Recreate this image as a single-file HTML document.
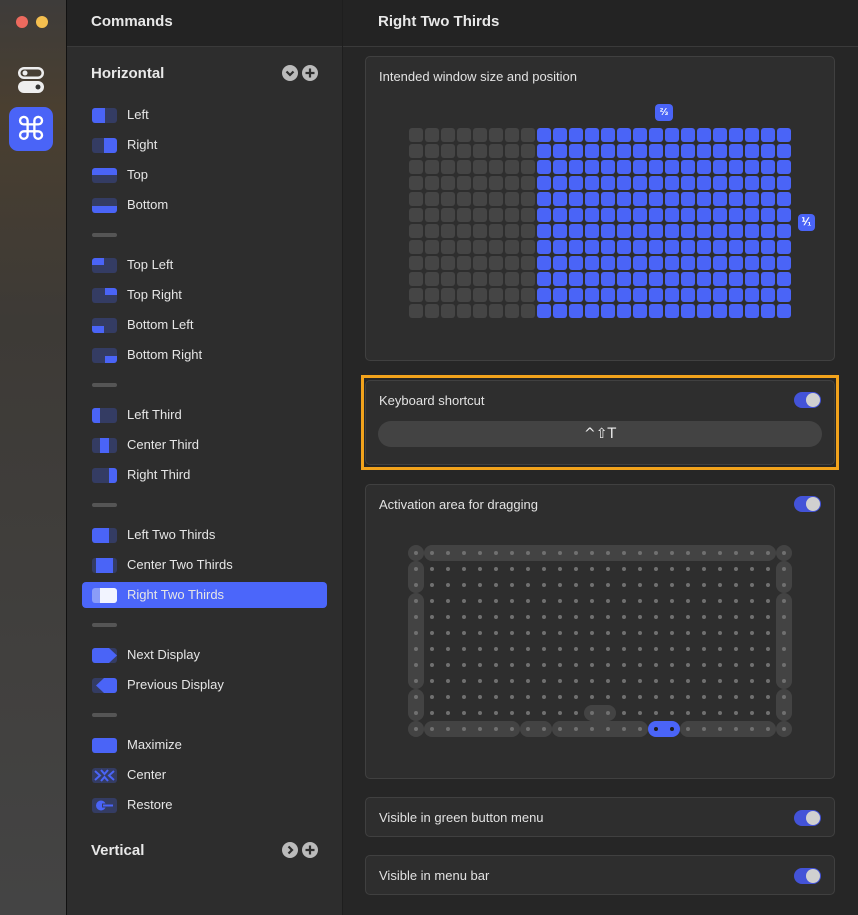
<!DOCTYPE html>
<html><head><meta charset="utf-8">
<style>
*{margin:0;padding:0;box-sizing:border-box}
body{width:858px;height:915px;overflow:hidden;background:#262626;font-family:"Liberation Sans",sans-serif;color:#e6e6e6;position:relative}
.abs{position:absolute}
#strip{left:0;top:0;width:67px;height:915px;background:linear-gradient(180deg,#3e3c3a 0%,#4a3f30 12%,#3d3a36 35%,#444 100%);border-right:1px solid #111}
#mid{left:67px;top:0;width:276px;height:915px;background:#2d2d2d;border-right:1px solid #1e1e1e}
.hdr{top:0;height:47px;background:#232323;border-bottom:1px solid #3a3a3a}
.title{font-size:15px;font-weight:bold;color:#e8e8e8}
.item{position:absolute;left:127px;font-size:13px;color:#e6e6e6}
.ic{position:absolute;left:92px;width:25px;height:15px;border-radius:3px;background:#343c63;overflow:hidden}
.ic i{position:absolute;background:#4a64f7;display:block}
.sep{position:absolute;left:92px;width:25px;height:4px;border-radius:2px;background:#555}
.card{position:absolute;left:365px;width:470px;background:#2e2e2e;border:1px solid #404040;border-radius:5px}
.lbl{position:absolute;left:13px;font-size:13px;color:#e2e2e2}
.tg{position:absolute;right:13px;width:27px;height:16px;border-radius:8px;background:#4353d8}
.tg:after{content:"";position:absolute;right:1px;top:1px;width:14px;height:14px;border-radius:7px;background:#d0d0d0}
</style></head><body>
<div id="strip" class="abs">
 <div class="abs" style="left:16px;top:16px;width:12px;height:12px;border-radius:6px;background:#ec6a5e"></div>
 <div class="abs" style="left:36px;top:16px;width:12px;height:12px;border-radius:6px;background:#f4bf4f"></div>
 <svg class="abs" style="left:18px;top:67px" width="26" height="26"><rect x="1.25" y="1.25" width="23.5" height="9.5" rx="4.75" fill="none" stroke="#eee" stroke-width="2.5"/><circle cx="7" cy="6" r="2.5" fill="#eee"/><rect x="0" y="14" width="26" height="12" rx="6" fill="#eee"/><circle cx="20" cy="20" r="2.5" fill="#333"/></svg>
 <div class="abs" style="left:9px;top:107px;width:44px;height:44px;border-radius:9px;background:#4a64f7;color:#fff;font-size:32px;text-align:center;line-height:44px;font-family:'DejaVu Sans',sans-serif">⌘</div>
</div>
<div id="mid" class="abs">
 <div class="abs hdr" style="left:0;width:275px"></div>
 <div class="abs title" style="left:24px;top:13px">Commands</div>
 <div class="abs title" style="left:24px;top:65px">Horizontal</div>
 <svg class="abs" style="left:215px;top:65px" width="36" height="16"><circle cx="8" cy="8" r="8" fill="#bbb"/><path d="M4.5 6.5L8 10L11.5 6.5" stroke="#2d2d2d" stroke-width="2.2" fill="none"/><circle cx="28" cy="8" r="8" fill="#bbb"/><path d="M28 3.5V12.5M23.5 8H32.5" stroke="#2d2d2d" stroke-width="2.2"/></svg>
 <div class="abs title" style="left:24px;top:842px">Vertical</div>
 <svg class="abs" style="left:215px;top:842px" width="36" height="16"><circle cx="8" cy="8" r="8" fill="#bbb"/><path d="M6.5 4.5L10 8L6.5 11.5" stroke="#2d2d2d" stroke-width="2.2" fill="none"/><circle cx="28" cy="8" r="8" fill="#bbb"/><path d="M28 3.5V12.5M23.5 8H32.5" stroke="#2d2d2d" stroke-width="2.2"/></svg>
</div>
<div class="abs" style="left:82px;top:582px;width:245px;height:26px;border-radius:4px;background:#4b66fa"></div>
<div id="list"></div>
<div class="abs hdr" style="left:343px;width:515px"></div>
<div class="abs title" style="left:378px;top:13px">Right Two Thirds</div>

<div class="card" style="top:56px;height:305px">
 <div class="lbl" style="top:12px">Intended window size and position</div>
</div>
<div class="abs" style="left:655px;top:104px;width:18px;height:17px;border-radius:4px;background:#4a64f7;color:#fff;font-size:10px;text-align:center;line-height:17px;font-weight:bold">⅔</div>
<div class="abs" style="left:798px;top:214px;width:17px;height:17px;border-radius:4px;background:#4a64f7;color:#fff;font-size:10px;text-align:center;line-height:17px;font-weight:bold">⅟₁</div>
<div id="grid1"></div>

<div class="abs" style="left:361px;top:375px;width:478px;height:95px;border:3px solid #f2a31c"></div>
<div class="card" style="top:380px;height:85px">
 <div class="lbl" style="top:12px">Keyboard shortcut</div><div class="tg" style="top:11px"></div>
 <div class="abs" style="left:12px;top:40px;width:444px;height:26px;border-radius:13px;background:#434343;text-align:center;line-height:26px;font-size:14px;color:#eee;font-family:'DejaVu Sans',sans-serif">^⇧T</div>
</div>
<div class="card" style="top:484px;height:295px">
 <div class="lbl" style="top:12px">Activation area for dragging</div><div class="tg" style="top:11px"></div>
</div>
<div id="grid2"></div>
<div class="card" style="top:797px;height:40px"><div class="lbl" style="top:12px">Visible in green button menu</div><div class="tg" style="top:12px"></div></div>
<div class="card" style="top:855px;height:40px"><div class="lbl" style="top:12px">Visible in menu bar</div><div class="tg" style="top:12px"></div></div>

<script>
var L=document.getElementById('list'),h='';
var items=[[115,'Left',[0,0,13,15]],[145,'Right',[12,0,13,15]],[175,'Top',[0,0,25,7]],[205,'Bottom',[0,8,25,7]],
[265,'Top Left',[0,0,12,7]],[295,'Top Right',[13,0,12,7]],[325,'Bottom Left',[0,8,12,7]],[355,'Bottom Right',[13,8,12,7]],
[415,'Left Third',[0,0,8,15]],[445,'Center Third',[8,0,9,15]],[475,'Right Third',[17,0,8,15]],
[535,'Left Two Thirds',[0,0,17,15]],[565,'Center Two Thirds',[4,0,17,15]],[595,'Right Two Thirds',[8,0,17,15],1],
[655,'Next Display',null,2],[685,'Previous Display',null,3],[745,'Maximize',[0,0,25,15]],[775,'Center',null,4],[805,'Restore',null,5]];
items.forEach(function(it){var y=it[0]-7;var bg=it[3]==1?'#8a9cf8':'#343c63';var c=it[3]==1?'#f2f4ff':'#4a64f7';
 h+='<div class="ic" style="top:'+y+'px;background:'+bg+'">';
 if(it[2])h+='<i style="left:'+it[2][0]+'px;top:'+it[2][1]+'px;width:'+it[2][2]+'px;height:'+it[2][3]+'px;background:'+c+'"></i>';
 if(it[3]==2)h+='<svg width="25" height="15" style="position:absolute;left:0;top:0"><path d="M0 0H17L25 7.5L17 15H0Z" fill="#4a64f7"/></svg>';
 if(it[3]==3)h+='<svg width="25" height="15" style="position:absolute;left:0;top:0"><path d="M25 0H12L4 7.5L12 15H25Z" fill="#4a64f7"/></svg>';
 if(it[3]==4)h+='<svg width="25" height="15" style="position:absolute;left:0;top:0"><path d="M3 3L8 7.5L3 12M22 3L17 7.5L22 12M9 2L12.5 6L16 2M9 13L12.5 9L16 13" stroke="#4a64f7" stroke-width="2" fill="none"/></svg>';
 if(it[3]==5)h+='<svg width="25" height="15" style="position:absolute;left:0;top:0"><circle cx="9" cy="7.5" r="5" fill="#4a64f7"/><path d="M10 7.5H22" stroke="#343c63" stroke-width="4"/><path d="M11 7.5H21" stroke="#4a64f7" stroke-width="2"/></svg>';
 h+='</div><div class="item" style="top:'+(it[0]-8)+'px">'+it[1]+'</div>';});
[235,385,505,625,715].forEach(function(y){h+='<div class="sep" style="top:'+(y-2)+'px"></div>';});
L.innerHTML=h;
var g='';for(var r=0;r<12;r++)for(var c=0;c<24;c++)g+='<div class="abs" style="left:'+(409+c*16)+'px;top:'+(128+r*16)+'px;width:14px;height:14px;border-radius:3px;background:'+(c<8?'#454545':'#4a64f7')+'"></div>';
document.getElementById('grid1').innerHTML=g;
var s='';
function pill(x1,y1,x2,y2,col){s+='<div class="abs" style="left:'+(x1-8)+'px;top:'+(y1-8)+'px;width:'+(x2-x1+16)+'px;height:'+(y2-y1+16)+'px;border-radius:8px;background:'+col+'"></div>';}
var X=function(k){return 416+16*k},Y=function(k){return 553+16*k};
pill(X(0),Y(0),X(0),Y(0),'#434343');pill(X(1),Y(0),X(22),Y(0),'#434343');pill(X(23),Y(0),X(23),Y(0),'#434343');
pill(X(0),Y(1),X(0),Y(2),'#434343');pill(X(0),Y(3),X(0),Y(8),'#434343');pill(X(0),Y(9),X(0),Y(10),'#434343');pill(X(0),Y(11),X(0),Y(11),'#434343');
pill(X(23),Y(1),X(23),Y(2),'#434343');pill(X(23),Y(3),X(23),Y(8),'#434343');pill(X(23),Y(9),X(23),Y(10),'#434343');pill(X(23),Y(11),X(23),Y(11),'#434343');
pill(X(1),Y(11),X(6),Y(11),'#434343');pill(X(7),Y(11),X(8),Y(11),'#434343');pill(X(9),Y(11),X(14),Y(11),'#434343');pill(X(15),Y(11),X(16),Y(11),'#4a64f7');pill(X(17),Y(11),X(22),Y(11),'#434343');
pill(X(11),Y(10),X(12),Y(10),'#434343');
for(var r=0;r<12;r++)for(var c=0;c<24;c++){var col=(r==11&&(c==15||c==16))?'#1e1e1e':'#707070';s+='<div class="abs" style="left:'+(X(c)-2)+'px;top:'+(Y(r)-2)+'px;width:4px;height:4px;border-radius:2px;background:'+col+'"></div>';}
document.getElementById('grid2').innerHTML=s;
</script>
</body></html>
